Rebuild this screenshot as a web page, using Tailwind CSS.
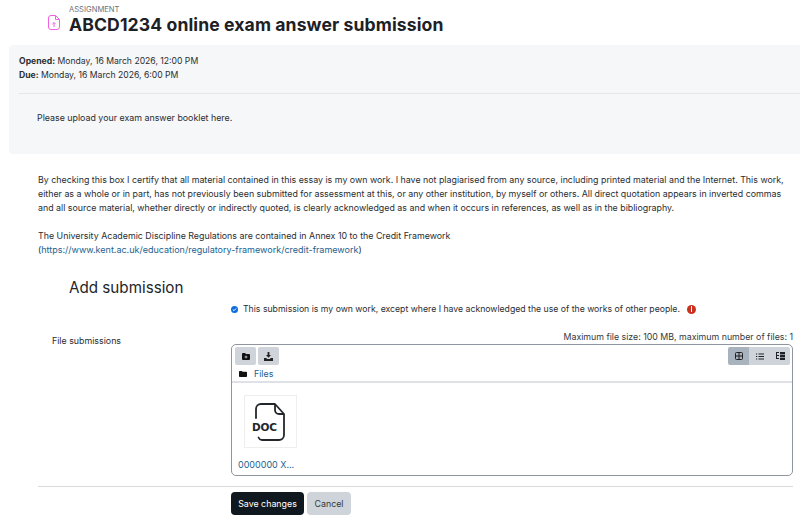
<!DOCTYPE html>
<html><head><meta charset="utf-8"><script src="https://cdn.jsdelivr.net/npm/@tailwindcss/browser@4"></script></head>
<body class="bg-white">
<div class="w-[800px] h-[526px] overflow-hidden font-['Inter',sans-serif] text-[8.85px] leading-[14px] text-[#2a2e32] bg-white">
  <header class="h-[45px] flex pl-[48px] pt-[6px]">
    <svg class="w-[12px] h-[15px] mt-[9px]" viewBox="0 0 12 15" fill="none" stroke="#f35fe2" stroke-width="1"><path d="M3 .5h4.500l4 4V12a2.500 2.500 0 0 1-2.500 2.500H3A2.500 2.500 0 0 1 .5 12V3A2.500 2.500 0 0 1 3 .5zM7.500.5V4.500h4M6 12V7.500M4.300 9.200L6 7.500l1.700 1.700"/></svg>
    <div class="ml-[9px]">
      <div class="text-[7.6px] leading-[8px] text-[#6a737b]">ASSIGNMENT</div>
      <h1 class="text-[17.6px] leading-[18px] mt-[2px] font-bold tracking-[0.1px] text-[#1d2125]">ABCD1234 online exam answer submission</h1>
    </div>
  </header>
  <section class="h-[109px] ml-[9px] bg-[#f6f7f9] rounded-l-[4px] pl-[10px] pt-[9px]">
    <div class="h-[14px] text-[8.65px]"><strong class="font-bold">Opened:</strong> Monday, 16 March 2026, 12:00 PM</div>
    <div class="h-[14px] text-[8.65px]"><strong class="font-bold">Due:</strong> Monday, 16 March 2026, 6:00 PM</div>
    <div class="border-t border-[#e4e6e9] mt-[11px]"></div>
    <p class="pl-[18px] mt-[17px]">Please upload your exam answer booklet here.</p>
  </section>
  <section class="pl-[38px] pr-[8px] mt-[19px]">
    <p class="whitespace-nowrap">By checking this box I certify that all material contained in this essay is my own work. I have not plagiarised from any source, including printed material and the Internet. This work,<br>either as a whole or in part, has not previously been submitted for assessment at this, or any other institution, by myself or others. All direct quotation appears in inverted commas<br>and all source material, whether directly or indirectly quoted, is clearly acknowledged as and when it occurs in references, as well as in the bibliography.</p>
    <p class="mt-[14px]">The University Academic Discipline Regulations are contained in Annex 10 to the Credit Framework<br>(<a class="text-[9px] text-[#1d5f8f]">https://www.kent.ac.uk/education/regulatory-framework/credit-framework</a>)</p>
  </section>
  <h2 class="ml-[69px] mt-[21px] text-[15.2px] leading-[20px] font-normal text-[#22262a]">Add submission</h2>
  <div class="ml-[231px] mt-[4px] h-[14px] flex items-center">
    <span class="w-[7px] h-[7px] rounded-full bg-[#0f6cdf] flex items-center justify-center"><svg class="w-[7px] h-[7px]" viewBox="0 0 7 7" fill="none" stroke="#fff" stroke-width="1"><path d="M1.800 3.600l1.200 1.100 2.200-2.300"/></svg></span>
    <span class="ml-[5px] text-[8.7px]">This submission is my own work, except where I have acknowledged the use of the works of other people.</span>
    <span class="ml-[7px] w-[9px] h-[9px] rounded-full bg-[#ca3120] flex flex-col items-center justify-center gap-[0.5px]"><span class="w-[1.2px] h-[3.6px] bg-white"></span><span class="w-[1.2px] h-[1.2px] bg-white"></span></span>
  </div>
  <div class="flex ml-[52px] mt-[14px]">
    <div class="w-[179px] pt-[4px]">File submissions</div>
    <div class="w-[562px]">
      <div class="text-right h-[14px] text-[8.8px] text-[#343a40]">Maximum file size: 100 MB, maximum number of files: 1</div>
      <div class="h-[132px] border border-[#8f959e] rounded-[5px] flex flex-col">
        <div class="h-[38px] border-b-2 border-[#dee2e6] pl-[3px] pr-[2px] pt-[2px]">
          <div class="flex justify-between">
            <div class="flex gap-[2px]">
              <span class="w-[21px] h-[18px] bg-[#ced4da] rounded-[2px] flex items-center justify-center"><svg class="w-[8px] h-[7px]" viewBox="0 0 8 7" fill="#111"><path d="M0 1a1 1 0 0 1 1-1h2l1 1h3a1 1 0 0 1 1 1v4a1 1 0 0 1-1 1H1a1 1 0 0 1-1-1z"/><path d="M4 2.600v2.800M2.600 4h2.800" stroke="#ced4da" stroke-width=".8"/></svg></span>
              <span class="w-[21px] h-[18px] bg-[#ced4da] rounded-[2px] flex items-center justify-center"><svg class="w-[9px] h-[9px]" viewBox="0 0 9 9" fill="#222"><path d="M3.600 0h1.800v3H7L4.500 5.800 2 3h1.600zM0 6h2.200l1 1h2.600l1-1H9v3H0z"/></svg></span>
            </div>
            <div class="flex rounded-[2px] overflow-hidden">
              <span class="w-[21px] h-[18px] bg-[#a9b3bd] flex items-center justify-center"><svg class="w-[8px] h-[8px]" viewBox="0 0 8 8" fill="none" stroke="#1d2125" stroke-width="1"><rect x=".5" y=".5" width="7" height="7" rx="1"/><path d="M4 .5v7M.5 4h7"/></svg></span>
              <span class="w-[21px] h-[18px] bg-[#ced4da] flex items-center justify-center"><svg class="w-[8px] h-[7px]" viewBox="0 0 8 7" fill="none" stroke="#1d2125" stroke-width="1"><path d="M2.500 1H8M2.500 3.500H8M2.500 6H8M0 1h1.200M0 3.500h1.200M0 6h1.200"/></svg></span>
              <span class="w-[20px] h-[18px] bg-[#ced4da] flex items-center justify-center"><svg class="w-[9px] h-[8px]" viewBox="0 0 9 8" fill="#1d2125"><path d="M0 0h3v1H1v2h2v1H1v2h2v1H0z"/><rect x="4" y="0" width="5" height="2.400"/><rect x="4" y="3" width="5" height="2"/><rect x="4" y="5.600" width="5" height="2.400"/></svg></span>
            </div>
          </div>
          <div class="flex items-center h-[14px] mt-[2px] pl-[4px]">
            <svg class="w-[8px] h-[6px]" viewBox="0 0 8 6" fill="#111"><path d="M0 .8A.8.8 0 0 1 .8 0h2l.8.8h3.600a.8.8 0 0 1 .8.8v3.600a.8.8 0 0 1-.8.8H.8a.8.8 0 0 1-.8-.8z"/></svg>
            <a class="ml-[7px] text-[#1d5f8f]">Files</a>
          </div>
        </div>
        <div class="pl-[12px] pt-[12px]">
          <div class="relative w-[53px] h-[53px] border border-[#eeeeee]">
            <svg class="absolute left-[9px] top-[6px] w-[32px] h-[40px]" viewBox="0 0 32 40" fill="none" stroke="#23272b" stroke-width="1.800" stroke-linecap="round" stroke-linejoin="round">
              <path d="M2 16V7a5 5 0 0 1 5-5h14l9 10v21a5 5 0 0 1-5 5H8a4 4 0 0 1-3.500-2.500M21 2.500V8a4 4 0 0 0 4 4h5"/>
            </svg>
            <span class="absolute left-[7px] top-[25px] text-[10.5px] leading-[13px] font-bold text-[#23272b] font-['DejaVu_Sans',sans-serif] tracking-[-0.2px] bg-white">DOC</span>
          </div>
          <div class="mt-[10px] -ml-[6px]"><a class="text-[9px] text-[#1d5f8f]">0000000 X...</a></div>
        </div>
      </div>
    </div>
  </div>
  <div class="border-t border-[#d8dbde] ml-[38px] mr-[7px] mt-[10px]"></div>
  <div class="ml-[231px] mt-[5px] flex gap-[3px]">
    <button class="w-[73px] h-[23px] bg-[#10181f] text-white rounded-[4px]">Save changes</button>
    <button class="w-[44px] h-[23px] bg-[#ced4da] rounded-[4px] text-[#343a40]">Cancel</button>
  </div>
</div>
</body></html>
